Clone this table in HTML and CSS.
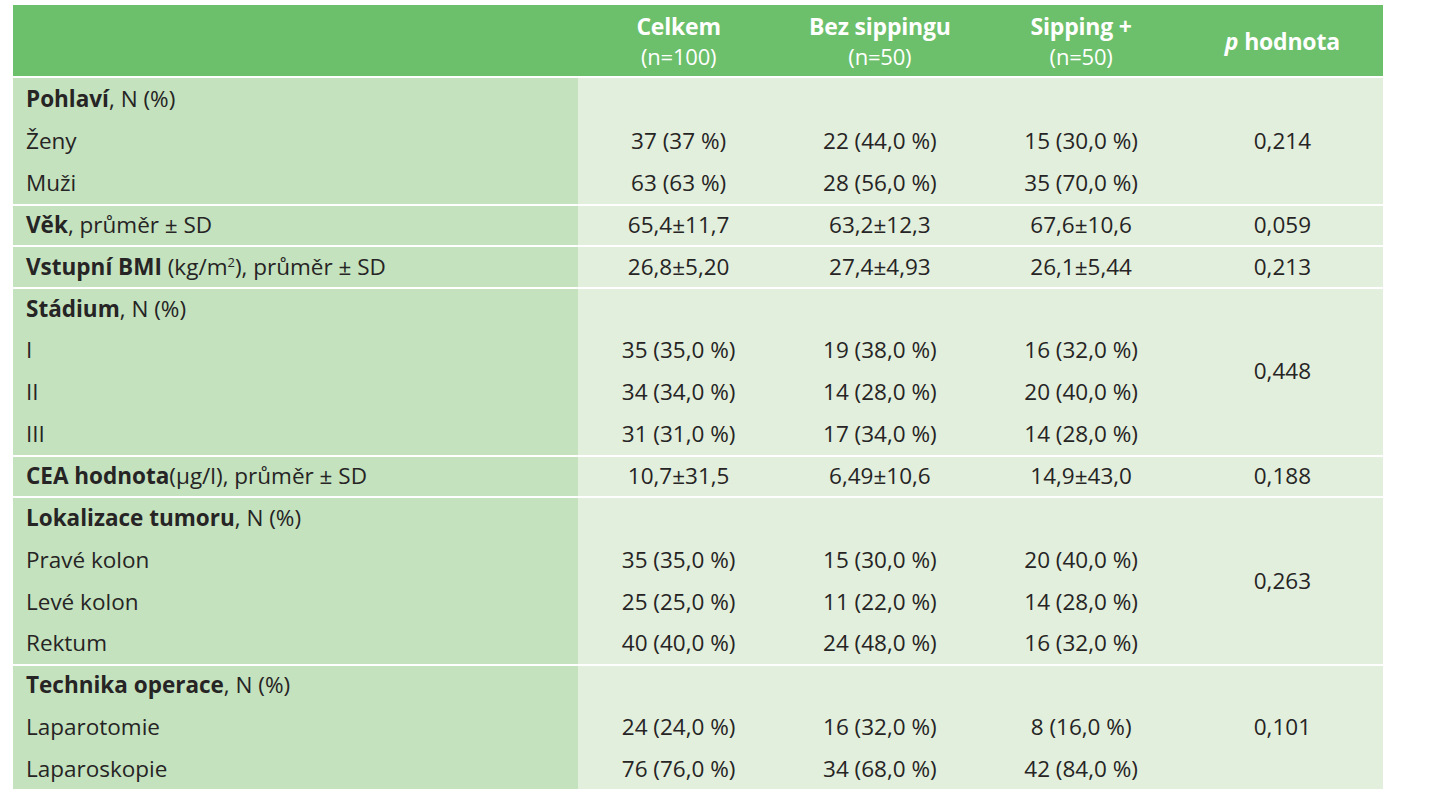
FILE: index.html
```html
<!DOCTYPE html>
<html lang="cs">
<head>
<meta charset="utf-8">
<link rel="stylesheet" href="styles.css">
</head>
<body>
<table class="tbl">
  <colgroup>
    <col class="c-label">
    <col class="c-val">
    <col class="c-val">
    <col class="c-val">
    <col class="c-val">
  </colgroup>
  <thead>
    <tr>
      <th class="h-label"></th>
      <th><span class="h-main">Celkem</span><span class="h-sub">(n=100)</span></th>
      <th><span class="h-main">Bez sippingu</span><span class="h-sub">(n=50)</span></th>
      <th><span class="h-main">Sipping +</span><span class="h-sub">(n=50)</span></th>
      <th><span class="h-main"><i>p</i> hodnota</span></th>
    </tr>
  </thead>
  <tbody class="grp first">
    <tr><td class="lbl"><b>Pohlaví</b>, N (%)</td><td></td><td></td><td></td><td class="p" rowspan="3">0,214</td></tr>
    <tr><td class="lbl">Ženy</td><td>37 (37 %)</td><td>22 (44,0 %)</td><td>15 (30,0 %)</td></tr>
    <tr><td class="lbl">Muži</td><td>63 (63 %)</td><td>28 (56,0 %)</td><td>35 (70,0 %)</td></tr>
  </tbody>
  <tbody class="grp">
    <tr><td class="lbl"><b>Věk</b>, průměr ± SD</td><td>65,4±11,7</td><td>63,2±12,3</td><td>67,6±10,6</td><td class="p">0,059</td></tr>
  </tbody>
  <tbody class="grp">
    <tr><td class="lbl"><b>Vstupní BMI</b> (kg/m<sup>2</sup>), průměr ± SD</td><td>26,8±5,20</td><td>27,4±4,93</td><td>26,1±5,44</td><td class="p">0,213</td></tr>
  </tbody>
  <tbody class="grp">
    <tr><td class="lbl"><b>Stádium</b>, N (%)</td><td></td><td></td><td></td><td class="p" rowspan="4">0,448</td></tr>
    <tr><td class="lbl">I</td><td>35 (35,0 %)</td><td>19 (38,0 %)</td><td>16 (32,0 %)</td></tr>
    <tr><td class="lbl">II</td><td>34 (34,0 %)</td><td>14 (28,0 %)</td><td>20 (40,0 %)</td></tr>
    <tr><td class="lbl">III</td><td>31 (31,0 %)</td><td>17 (34,0 %)</td><td>14 (28,0 %)</td></tr>
  </tbody>
  <tbody class="grp">
    <tr><td class="lbl"><b>CEA hodnota</b>(µg/l), průměr ± SD</td><td>10,7±31,5</td><td>6,49±10,6</td><td>14,9±43,0</td><td class="p">0,188</td></tr>
  </tbody>
  <tbody class="grp">
    <tr><td class="lbl"><b>Lokalizace tumoru</b>, N (%)</td><td></td><td></td><td></td><td class="p" rowspan="4">0,263</td></tr>
    <tr><td class="lbl">Pravé kolon</td><td>35 (35,0 %)</td><td>15 (30,0 %)</td><td>20 (40,0 %)</td></tr>
    <tr><td class="lbl">Levé kolon</td><td>25 (25,0 %)</td><td>11 (22,0 %)</td><td>14 (28,0 %)</td></tr>
    <tr><td class="lbl">Rektum</td><td>40 (40,0 %)</td><td>24 (48,0 %)</td><td>16 (32,0 %)</td></tr>
  </tbody>
  <tbody class="grp">
    <tr><td class="lbl"><b>Technika operace</b>, N (%)</td><td></td><td></td><td></td><td class="p" rowspan="3">0,101</td></tr>
    <tr><td class="lbl">Laparotomie</td><td>24 (24,0 %)</td><td>16 (32,0 %)</td><td>8 (16,0 %)</td></tr>
    <tr><td class="lbl">Laparoskopie</td><td>76 (76,0 %)</td><td>34 (68,0 %)</td><td>42 (84,0 %)</td></tr>
  </tbody>
</table>
</body>
</html>
```

FILE: styles.css
```css
html, body {
  margin: 0;
  padding: 0;
  background: #ffffff;
}
body {
  padding: 5px 0 0 13px;
  font-family: "Open Sans", "Noto Sans", sans-serif;
  color: #262424;
}
.tbl {
  border-collapse: collapse;
  border-spacing: 0;
  table-layout: fixed;
  width: 1370px;
  font-size: 22.5px;
}
.c-label { width: 565px; }
.c-val { width: 201.25px; }

thead th {
  background: #6cc06b;
  color: #ffffff;
  height: 71px;
  padding: 0;
  border-bottom: 2px solid #ffffff;
  text-align: center;
  vertical-align: middle;
  font-weight: 700;
  font-size: 23px;
  letter-spacing: -0.2px;
}
.h-main, .h-sub {
  display: block;
  line-height: 30px;
}
.h-sub {
  font-weight: 400;
  font-size: 22px;
}
.h-main i { font-style: italic; }

td {
  height: 40.85px;
  padding: 1px 0 0;
  text-align: center;
  vertical-align: middle;
  background: #e2efdc;
  white-space: nowrap;
  line-height: 26px;
}
td.lbl {
  background: #c4e2be;
  text-align: left;
  padding-left: 13px;
}
.grp:not(.first) tr:first-child td {
  box-shadow: inset 0 2px 0 #ffffff;
}
b { font-weight: 700; }
sup {
  font-size: 13px;
  line-height: 0;
  vertical-align: 8px;
}
```
